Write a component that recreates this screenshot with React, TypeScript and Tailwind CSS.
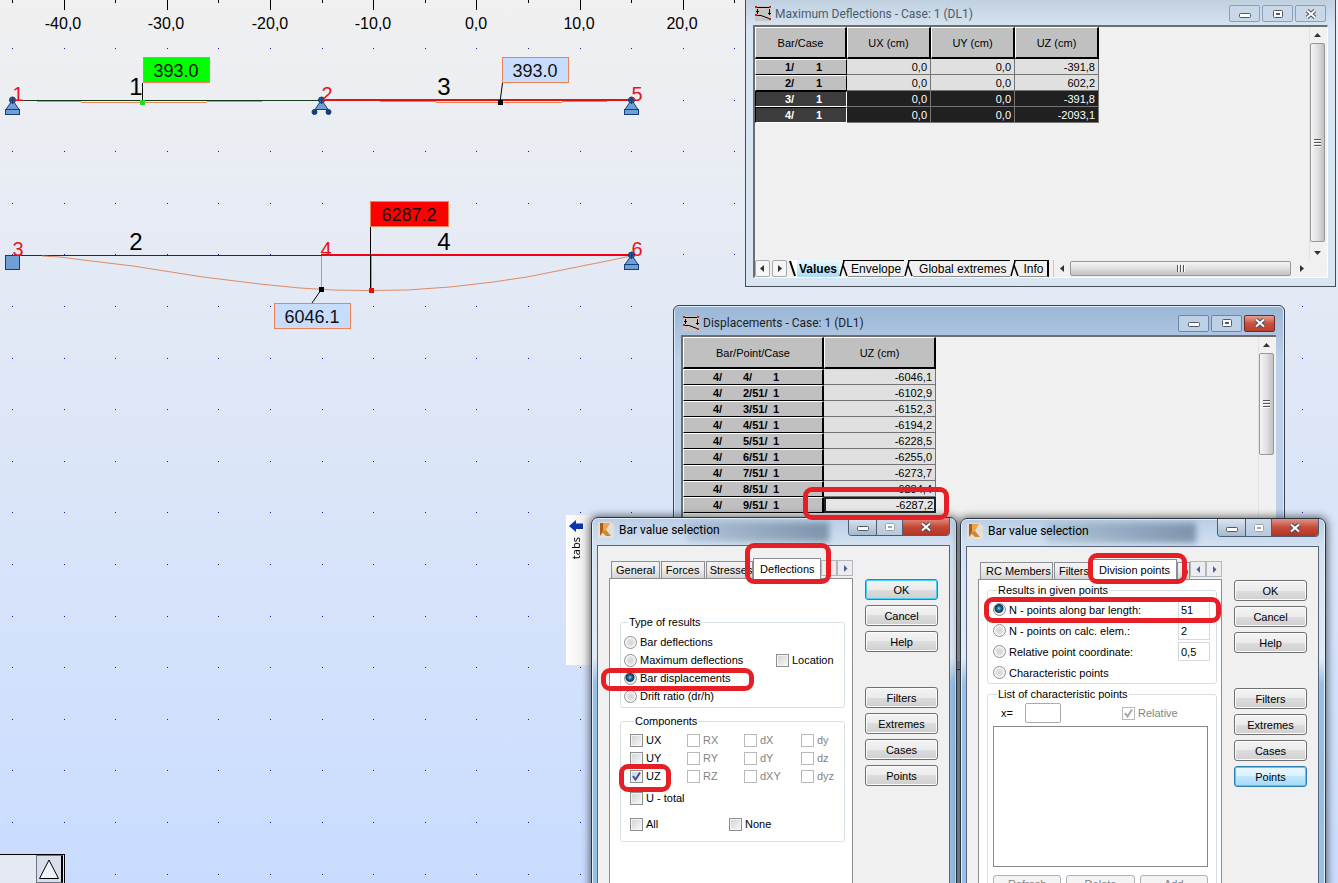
import type { ReactNode } from 'react';
import clsx from 'clsx';

const GRID_STEP = 51.6;
const GRID_X = Array.from({ length: 26 }, (_, i) => Math.round(12 + i * GRID_STEP));
const GRID_Y = Array.from({ length: 17 }, (_, i) => Math.round(48 + i * 51.6));

const AXIS_LABELS = [
  { x: 63, text: '-40,0' },
  { x: 166, text: '-30,0' },
  { x: 270, text: '-20,0' },
  { x: 373, text: '-10,0' },
  { x: 476, text: '0,0' },
  { x: 579, text: '10,0' },
  { x: 682, text: '20,0' },
];

const NODES = [
  { x: 18, y: 101, text: '1' },
  { x: 327, y: 101, text: '2' },
  { x: 637, y: 101, text: '5' },
  { x: 18, y: 256, text: '3' },
  { x: 326, y: 256, text: '4' },
  { x: 637, y: 256, text: '6' },
];

const BARS = [
  { x: 136, y: 95, text: '1' },
  { x: 444, y: 95, text: '3' },
  { x: 136, y: 250, text: '2' },
  { x: 444, y: 250, text: '4' },
];

const MAX_DEFLECTIONS = [
  { bar: '1/', values: ['0,0', '0,0', '-391,8'], selected: false },
  { bar: '2/', values: ['0,0', '0,0', '602,2'], selected: false },
  { bar: '3/', values: ['0,0', '0,0', '-391,8'], selected: true },
  { bar: '4/', values: ['0,0', '0,0', '-2093,1'], selected: true },
];

const DISPLACEMENTS = [
  { point: '4/', value: '-6046,1' },
  { point: '2/51/', value: '-6102,9' },
  { point: '3/51/', value: '-6152,3' },
  { point: '4/51/', value: '-6194,2' },
  { point: '5/51/', value: '-6228,5' },
  { point: '6/51/', value: '-6255,0' },
  { point: '7/51/', value: '-6273,7' },
  { point: '8/51/', value: '-6284,4' },
  { point: '9/51/', value: '-6287,2' },
];

const COMPONENT_ROWS = [
  ['UX', 'RX', 'dX', 'dy'],
  ['UY', 'RY', 'dY', 'dz'],
  ['UZ', 'RZ', 'dXY', 'dyz'],
];

/* ---------- structural view ---------- */

function SupportBody({ x, y }: { x: number; y: number }) {
  return (
    <>
      <path d={`M${x - 1} ${y + 2}L${x - 6} ${y + 9.5}H${x + 7}L${x + 2} ${y + 2}Z`} />
      <circle cx={x + 0.5} cy={y} r="3" fill="#2c64a8" />
      <path d={`M${x - 3} ${y}H${x + 4}M${x + 0.5} ${y - 3}V${y + 4}`} />
    </>
  );
}

function PinSupport({ x, y }: { x: number; y: number }) {
  return (
    <g stroke="#123f78" fill="#6f9fd6">
      <SupportBody x={x} y={y} />
      <rect x={x - 6.5} y={y + 9.5} width="14" height="5" />
    </g>
  );
}

function RollerSupport({ x, y }: { x: number; y: number }) {
  return (
    <g stroke="#123f78" fill="#6f9fd6">
      <SupportBody x={x} y={y} />
      <path d={`M${x - 5} ${y + 9.5}L${x - 8} ${y + 12}M${x + 6} ${y + 9.5}L${x + 9} ${y + 12}`} strokeWidth="2" />
      <circle cx={x - 6.5} cy={y + 12} r="2.5" fill="#0c4285" />
      <circle cx={x + 7.5} cy={y + 12} r="2.5" fill="#0c4285" />
    </g>
  );
}

function ValueLabel({ x, y, width, fill, text }: { x: number; y: number; width: number; fill: string; text: string }) {
  return (
    <g>
      <rect x={x + 0.5} y={y + 0.5} width={width} height="25" fill={fill} stroke="#ef8354" />
      <text x={x + width / 2} y={y + 20} fontSize="18" textAnchor="middle" fill="#111">
        {text}
      </text>
    </g>
  );
}

function StructureView() {
  return (
    <svg className="absolute inset-0 h-full w-full font-['Liberation_Sans',sans-serif]">
      <g shapeRendering="crispEdges">
        {GRID_X.map((x, i) => (
          <g key={x}>
            <rect x={x} y="0" width="1" height={i % 2 ? 10 : 3} fill="#000" />
            {GRID_Y.map((y) => (
              <rect key={y} x={x} y={y} width="1" height="1" fill="#1a1a9c" />
            ))}
          </g>
        ))}
      </g>
      {AXIS_LABELS.map(({ x, text }) => (
        <text key={text} x={x} y="29" fontSize="16" textAnchor="middle">
          {text}
        </text>
      ))}

      <g shapeRendering="crispEdges" fill="none">
        <path d="M12 100.5H321M12 255.5H321" stroke="#123c1a" />
        <path d="M37 101.5H81M207 101.5H262M81 102.5H207" stroke="#e58a5c" />
        <path d="M321 100H631" stroke="#dc1414" strokeWidth="2" />
        <path d="M436 102.5H562M380 101.5H436M562 101.5H607" stroke="#f07a4a" />
        <path d="M321 255H631" stroke="#f00010" strokeWidth="2" />
        <path d="M321.5 256V289M371.5 256V290" stroke="#e58a5c" />
      </g>
      <polyline
        points="42,256 60,257 83,260 133,266 203,277 260,284 300,288 333,290 371,290.5 407,290 450,287 493,282 527,277 577,267 607,261 631,256"
        fill="none"
        stroke="#e08a62"
      />

      <path d="M142.5 83V102M502.5 83L500 102M370.5 227V290M321 290L312 303" stroke="#000" fill="none" />
      <rect x="140" y="100" width="5" height="5" fill="#20dc20" />
      <rect x="498" y="100" width="5" height="5" />
      <rect x="319" y="287" width="5" height="5" />
      <rect x="369" y="288" width="5" height="5" fill="#e80c0c" />

      <PinSupport x={12} y={100} />
      <RollerSupport x={321} y={100} />
      <PinSupport x={631} y={100} />
      <PinSupport x={631} y={255} />
      <rect x="5.5" y="255.5" width="14" height="14" fill="#6f9fd6" stroke="#123f78" />

      {NODES.map(({ x, y, text }) => (
        <text key={text} x={x} y={y} fontSize="20" textAnchor="middle" fill="#e8141c">
          {text}
        </text>
      ))}
      {BARS.map(({ x, y, text }) => (
        <text key={text} x={x} y={y} fontSize="24" textAnchor="middle">
          {text}
        </text>
      ))}

      <ValueLabel x={143} y={57} width={66} fill="#00ff00" text="393.0" />
      <ValueLabel x={502} y={57} width={66} fill="#c8dcff" text="393.0" />
      <ValueLabel x={370} y={201} width={78} fill="#ff0000" text="6287.2" />
      <ValueLabel x={274} y={303} width={76} fill="#c8dcff" text="6046.1" />
    </svg>
  );
}

/* ---------- window parts ---------- */

function TableIcon() {
  return (
    <svg viewBox="0 0 16 15" className="h-[15px] w-4 shrink-0">
      <rect width="16" height="15" fill="#c6c6c6" />
      <path d="M1 1.5H15M1 9.5H6L14 12.5" stroke="#000" fill="none" />
      <path d="M2.5 3V8M14.5 3V9M1 5.5H4M13 7.5H16" stroke="#000" fill="none" />
      <path d="M0 0H2V2H0ZM14 0H16V2H14ZM0 8H2V10H0ZM14 12H16V14H14Z" fill="#e01818" />
    </svg>
  );
}

function RobotIcon() {
  return (
    <svg viewBox="0 0 16 16" className="h-4 w-4 shrink-0">
      <path d="M0 0H13L16 3V16H0Z" fill="#fbe6c8" opacity=".55" />
      <path d="M2 1H5V9L2 14Z" fill="#a85f1c" />
      <path d="M5 1H12L8 8L5 9Z" fill="#eda445" />
      <path d="M2 14L5 9L8 8L13 14H8L5 11Z" fill="#d0862c" />
    </svg>
  );
}

function MinimizeGlyph({ muted = false }: { muted?: boolean }) {
  return (
    <svg viewBox="0 0 12 10" className="h-[10px] w-3">
      <rect x="0.5" y="4.5" width="11" height="4" rx="1" fill="#fff" stroke={muted ? '#9aa4b0' : '#51586a'} />
    </svg>
  );
}

function MaximizeGlyph({ muted = false }: { muted?: boolean }) {
  return (
    <svg viewBox="0 0 12 10" className="h-[10px] w-3">
      <rect x="1.5" y="1.5" width="9" height="7" rx="1" fill="#fff" stroke={muted ? '#9aa4b0' : '#51586a'} />
      <rect x="4.5" y="4.5" width="3" height="1" fill="none" stroke={muted ? '#9aa4b0' : '#51586a'} />
    </svg>
  );
}

function CloseGlyph() {
  return (
    <svg viewBox="0 0 12 10" className="h-[10px] w-3">
      <path d="M2 1.5L10 8.5M10 1.5L2 8.5" stroke="#4a4f5c" strokeWidth="4" />
      <path d="M2 1.5L10 8.5M10 1.5L2 8.5" stroke="#fff" strokeWidth="2" />
    </svg>
  );
}

const CLOSE_RED = 'border-[#6b2a28] bg-linear-to-b from-[#e3a092] from-0% via-[#c8503c] via-50% to-[#b8402c]';

function ChildWindowButtons({ active }: { active: boolean }) {
  const base = 'flex h-[17px] w-[31px] items-center justify-center rounded-[2px] border';
  const plain = active ? 'border-[#6d86a8] bg-[#bcd0e6]' : 'border-[#8b9dba] bg-[#c9d8e8]';
  return (
    <div className="ml-auto flex gap-0.5">
      <button aria-label="Minimize" className={clsx(base, plain)}>
        <MinimizeGlyph />
      </button>
      <button aria-label="Maximize" className={clsx(base, plain)}>
        <MaximizeGlyph />
      </button>
      <button aria-label="Close" className={clsx(base, active ? CLOSE_RED : plain)}>
        <CloseGlyph />
      </button>
    </div>
  );
}

type Direction = 'up' | 'down' | 'left' | 'right';

const ARROWS: Record<Direction, string> = {
  up: 'M1 6L4.5 2L8 6Z',
  down: 'M1 3L4.5 7L8 3Z',
  left: 'M6 1L2 4.5L6 8Z',
  right: 'M3 1L7 4.5L3 8Z',
};

function Arrow({ dir }: { dir: Direction }) {
  return (
    <svg viewBox="0 0 9 9" className="h-[9px] w-[9px]">
      <path d={ARROWS[dir]} fill="#333" />
    </svg>
  );
}

function VerticalScrollbar({ thumb }: { thumb: string }) {
  return (
    <div className="flex w-[18px] flex-col items-center border-l border-[#e2e2e2] bg-[#f1f1f1] pr-0.5">
      <button aria-label="Scroll up" className="flex h-4 w-full items-center justify-center">
        <Arrow dir="up" />
      </button>
      <div
        className={clsx(
          'flex w-[15px] flex-col items-center justify-center gap-px rounded-[2px] border border-[#979797] bg-linear-to-r from-[#f5f5f5] via-[#e0e0e2] to-[#c0c0c6]',
          thumb,
        )}
      >
        <span className="h-0.5 w-[7px] border-b border-white bg-[#555]" />
        <span className="h-0.5 w-[7px] border-b border-white bg-[#555]" />
        <span className="h-0.5 w-[7px] border-b border-white bg-[#555]" />
      </div>
      <button aria-label="Scroll down" className="mt-auto flex h-4 w-full items-center justify-center">
        <Arrow dir="down" />
      </button>
    </div>
  );
}

function HeaderCell({ className, children }: { className: string; children: ReactNode }) {
  return (
    <th
      scope="col"
      className={clsx(
        'h-8 border-t border-r-2 border-b-2 border-l border-t-white border-r-black border-b-black border-l-white bg-[#c0c0c0] font-normal',
        className,
      )}
    >
      {children}
    </th>
  );
}

/* ---------- child windows ---------- */

function SheetSlant() {
  return (
    <svg viewBox="0 0 9 17" className="h-[17px] w-[9px] shrink-0">
      <path d="M4 0.5H9" stroke="#000" />
      <path d="M5 1L1 16M4 5L8 16" stroke="#000" strokeWidth="1.5" fill="none" />
    </svg>
  );
}

function MaxDeflectionsWindow() {
  return (
    <section className="absolute -top-px left-[745px] flex h-[288px] w-[591px] flex-col border border-[#454c56] bg-linear-to-b from-[#c0d0df] to-[#d8e5f2] to-10% pr-[7px] pb-2 pl-[7px]">
      <header className="flex h-[25px] items-center gap-1 pt-0.5 pr-0.5 pl-0.5">
        <TableIcon />
        <h2 className="font-['Roboto',sans-serif] text-xs text-[#4c5b6c]">Maximum Deflections - Case: 1 (DL1)</h2>
        <ChildWindowButtons active={false} />
      </header>
      <div className="flex min-h-0 flex-1 flex-col border-t-2 border-r border-b border-l-2 border-t-[#6d6d6d] border-r-white border-b-white border-l-[#6d6d6d] bg-[#f0f0f0]">
        <div className="flex min-h-0 flex-1">
          <div className="flex-1">
            <table className="border-separate border-spacing-0 text-[11px] leading-[14px] text-black">
              <thead>
                <tr>
                  <HeaderCell className="w-[92px]">Bar/Case</HeaderCell>
                  <HeaderCell className="w-[84px]">UX (cm)</HeaderCell>
                  <HeaderCell className="w-[84px]">UY (cm)</HeaderCell>
                  <HeaderCell className="w-[84px]">UZ (cm)</HeaderCell>
                </tr>
              </thead>
              <tbody>
                {MAX_DEFLECTIONS.map(({ bar, values, selected }) => (
                  <tr key={bar} className={clsx('h-4', selected && 'text-white')}>
                    <th
                      scope="row"
                      className={clsx(
                        'border p-0 pl-[29px] text-left',
                        selected
                          ? 'border-t-black border-r-white border-b-white border-l-black bg-[#3c3c3c]'
                          : 'border-t-white border-r-black border-b-black border-l-white bg-[#c0c0c0]',
                      )}
                    >
                      <span className="inline-block w-[31px]">{bar}</span>1
                    </th>
                    {values.map((value, i) => (
                      <td
                        key={i}
                        className={clsx(
                          'border-r border-b border-[#757575] p-0 pr-[3px] text-right',
                          selected ? 'bg-[#202020]' : 'bg-[#e0e0e0]',
                        )}
                      >
                        {value}
                      </td>
                    ))}
                  </tr>
                ))}
              </tbody>
            </table>
          </div>
          <VerticalScrollbar thumb="h-[199px]" />
        </div>
        <div className="flex h-[17px] items-stretch text-xs leading-4 text-black">
          <button aria-label="Previous sheet" className="flex w-[15px] items-center justify-center rounded-[2px] border border-[#a8a8a8] bg-[#f6f6f6]">
            <Arrow dir="left" />
          </button>
          <button aria-label="Next sheet" className="ml-0.5 flex w-[15px] items-center justify-center rounded-[2px] border border-[#a8a8a8] bg-[#f6f6f6]">
            <Arrow dir="right" />
          </button>
          <svg viewBox="0 0 8 17" className="ml-[2px] h-[17px] w-2">
            <path d="M1 0L6 17H8V0Z" fill="#fff" />
            <path d="M1 1L6 16" stroke="#000" strokeWidth="2" />
          </svg>
          <button className="bg-linear-to-b from-[#e8f8fe] to-[#a8dcf4] px-0.5 font-bold">Values</button>
          <SheetSlant />
          <button className="border-t border-b border-t-black border-b-[#888] px-[3px]">Envelope</button>
          <SheetSlant />
          <button className="border-t border-b border-t-black border-b-[#888] pr-1 pl-[6px]">Global extremes</button>
          <SheetSlant />
          <button className="border-t border-r-2 border-b border-black border-b-[#888] px-1">Info</button>
          <div className="ml-1 flex flex-1 items-center border-l border-[#c8c8c8]">
            <button aria-label="Scroll left" className="flex w-4 justify-center">
              <Arrow dir="left" />
            </button>
            <div className="flex h-[15px] flex-1 items-center justify-center gap-px rounded-[2px] border border-[#979797] bg-linear-to-b from-[#f5f5f5] via-[#e0e0e2] to-[#c0c0c6]">
              <span className="h-[7px] w-0.5 border-r border-white bg-[#555]" />
              <span className="h-[7px] w-0.5 border-r border-white bg-[#555]" />
              <span className="h-[7px] w-0.5 border-r border-white bg-[#555]" />
            </div>
            <button aria-label="Scroll right" className="mr-4 flex w-5 justify-center">
              <Arrow dir="right" />
            </button>
          </div>
        </div>
      </div>
    </section>
  );
}

function DisplacementsWindow() {
  return (
    <section className="absolute top-[305px] left-[673px] flex h-[365px] w-[612px] flex-col rounded-t-[6px] border border-[#39424e] bg-linear-to-b from-[#9ab6d6] to-[#bdd2ea] to-15% pr-2 pb-2 pl-[7px] shadow-[inset_0_0_0_1px_#dcebf8]">
      <header className="flex h-[29px] items-center gap-1 pt-[5px] pr-px pl-0.5">
        <TableIcon />
        <h2 className="font-['Roboto',sans-serif] text-xs text-[#1b1f26]">Displacements - Case: 1 (DL1)</h2>
        <ChildWindowButtons active />
      </header>
      <div className="flex min-h-0 flex-1 border-t-2 border-l-2 border-[#6d6d6d] bg-[#f0f0f0]">
        <div className="flex-1">
          <table className="border-separate border-spacing-0 text-[11px] leading-[14px] text-black">
            <thead>
              <tr>
                <HeaderCell className="w-[141px]">Bar/Point/Case</HeaderCell>
                <HeaderCell className="w-28">UZ (cm)</HeaderCell>
              </tr>
            </thead>
            <tbody>
              {DISPLACEMENTS.map(({ point, value }, i) => (
                <tr key={point} className="h-4">
                  <th
                    scope="row"
                    className="border border-r-2 border-t-white border-r-black border-b-black border-l-white bg-[#c0c0c0] p-0 pl-[29px] text-left"
                  >
                    <span className="inline-block w-[30px]">4/</span>
                    <span className="inline-block w-[30px]">{point}</span>1
                  </th>
                  <td
                    className={clsx(
                      'p-0 text-right',
                      i === DISPLACEMENTS.length - 1
                        ? 'border-2 border-[#222] bg-[#e6e6e6] pr-px leading-3'
                        : 'border-r border-b border-[#757575] bg-[#e0e0e0] pr-[3px]',
                    )}
                  >
                    {value}
                  </td>
                </tr>
              ))}
            </tbody>
          </table>
        </div>
        <VerticalScrollbar thumb="h-[102px]" />
      </div>
    </section>
  );
}

/* ---------- dialogs ---------- */

function CheckBox({ label, checked = false, disabled = false }: { label: string; checked?: boolean; disabled?: boolean }) {
  return (
    <label className={clsx('flex items-center gap-[3px]', disabled ? 'text-[#838383]' : 'text-black')}>
      <span className="grid">
        <input
          type="checkbox"
          defaultChecked={checked}
          disabled={disabled}
          className={clsx(
            'col-start-1 row-start-1 h-[13px] w-[13px] appearance-none border',
            disabled
              ? 'border-[#b9b9b9] bg-white'
              : 'border-[#8e8f8f] bg-linear-to-br from-[#cfd2d6] to-[#f8f8f8] shadow-[inset_0_0_0_1px_#f4f4f4]',
          )}
        />
        {checked && (
          <svg viewBox="0 0 13 13" className="pointer-events-none col-start-1 row-start-1 h-[13px] w-[13px]">
            <path d="M3 6L5.5 9.5L10 2.5" fill="none" stroke={disabled ? '#a8a8a8' : '#3a50a0'} strokeWidth="2" />
          </svg>
        )}
      </span>
      {label}
    </label>
  );
}

function Radio({ name, label, checked = false }: { name: string; label: string; checked?: boolean }) {
  return (
    <label className="flex items-center gap-[3px] whitespace-nowrap text-black">
      <input
        type="radio"
        name={name}
        defaultChecked={checked}
        className="h-[13px] w-[13px] appearance-none rounded-full border border-[#8e8f8f] bg-[radial-gradient(circle,#d4d6d9_0,#dddfe1_3px,#f8f8f8_5px)] checked:bg-[radial-gradient(circle_at_45%_40%,#8fd6f4_0,#1f6f9c_2px,#0c3350_4px,#eeeeee_5px)]"
      />
      {label}
    </label>
  );
}

function Group({ title, className, children }: { title: string; className: string; children: ReactNode }) {
  return (
    <fieldset className={clsx('min-w-0 rounded-[3px] border border-[#d5dfe5]', className)}>
      <legend className="ml-1 px-px leading-[14px] text-black">{title}</legend>
      {children}
    </fieldset>
  );
}

const TAB_CLASS =
  'h-[17px] overflow-hidden border border-b-0 border-[#8c8e94] bg-linear-to-b from-[#f3f3f3] via-[#ebebeb] to-[#d3d3d3] text-left whitespace-nowrap';
const ACTIVE_TAB_CLASS = 'relative -mb-px h-[21px] border border-b-0 border-[#8c8e94] bg-white whitespace-nowrap';

function TabArrow({ dir }: { dir: 'left' | 'right' }) {
  return (
    <button
      aria-label={`Scroll tabs ${dir}`}
      className="mb-0.5 flex h-4 w-4 items-center justify-center border border-[#b4b8bd] bg-[#ededf0]"
    >
      <svg viewBox="0 0 7 7" className="h-[7px] w-[7px]">
        <path d={dir === 'left' ? 'M5 0L1.5 3.5L5 7Z' : 'M2 0L5.5 3.5L2 7Z'} fill="#4a62a0" />
      </svg>
    </button>
  );
}

type ButtonState = 'normal' | 'default' | 'hot';

const BUTTON_STATES: Record<ButtonState, string> = {
  normal:
    'border-[#707070] bg-[linear-gradient(#f3f3f3,#ebebeb_50%,#dddddd_50%,#cfcfcf)] shadow-[inset_0_0_0_1px_#fcfcfc]',
  default:
    'border-[#3c7fb1] bg-[linear-gradient(#f3f3f3,#ebebeb_50%,#dddddd_50%,#cfcfcf)] shadow-[inset_0_0_0_1px_#48d0f4]',
  hot: 'border-[#2c7fb0] bg-[linear-gradient(#eaf6fd,#d9f0fc_50%,#bee6fd_50%,#a7d9f5)] shadow-[inset_0_0_0_1px_#48d0f4]',
};

function DialogButton({ label, state = 'normal' }: { label: string; state?: ButtonState }) {
  return (
    <button className={clsx('h-[21px] rounded-[3px] border text-center text-black', BUTTON_STATES[state])}>{label}</button>
  );
}

interface DialogProps {
  className: string;
  pointsState?: ButtonState;
  okState?: ButtonState;
  ghost: string;
  tabs: ReactNode;
  children: ReactNode;
}

function BarValueDialog({ className, pointsState, okState, ghost, tabs, children }: DialogProps) {
  return (
    <section
      className={clsx(
        'absolute -bottom-5 flex w-[366px] flex-col rounded-t-[7px] border border-[#2c3440] bg-[linear-gradient(#b9cee6,#d3e2f2_28px,#dfeaf6_140px,#98bfe6_165px)] pr-[6px] pl-[5px] shadow-[0_0_9px_1px_rgba(0,0,0,0.6),inset_0_0_0_1px_#e4f0fa]',
        className,
      )}
    >
      <header className="relative flex h-[27px] shrink-0 items-start pl-px">
        <div className={clsx('absolute top-1 h-5 bg-linear-to-r from-[#5c7690]/20 to-[#4c6680]/60 blur-[3px]', ghost)} />
        <div className="relative flex items-center gap-[5px] pt-1">
          <RobotIcon />
          <h2 className="font-['Roboto',sans-serif] text-xs leading-4 text-black">Bar value selection</h2>
        </div>
        <div className="relative ml-auto flex h-[18px] overflow-hidden rounded-b-[4px] border border-t-0 border-[#4e5c6e]">
          <button aria-label="Minimize" className="flex w-7 items-center justify-center border-r border-[#4e5c6e] bg-linear-to-b from-[#dbe6f1] to-[#a4b8ce]">
            <MinimizeGlyph />
          </button>
          <button aria-label="Maximize" className="flex w-[26px] items-center justify-center border-r border-[#4e5c6e] bg-linear-to-b from-[#cddbe9] to-[#b6c8da]">
            <MaximizeGlyph muted />
          </button>
          <button aria-label="Close" className="flex w-[46px] items-center justify-center bg-linear-to-b from-[#dd9486] via-[#c54a38] to-[#b23424]">
            <CloseGlyph />
          </button>
        </div>
      </header>
      <div className="flex flex-1 gap-3 border border-[#56657a] bg-[#f0f0f0] px-[11px] text-[11px] leading-[14px]">
        <div className="flex min-w-0 flex-1 flex-col pt-3">
          <div className="flex h-5 shrink-0 items-end pl-0.5">{tabs}</div>
          <div className="flex-1 border border-[#8c8e94] bg-white">{children}</div>
        </div>
        <div className="flex w-[73px] flex-col gap-[5px] pt-[33px]">
          <DialogButton label="OK" state={okState} />
          <DialogButton label="Cancel" />
          <DialogButton label="Help" />
          <div className="h-[25px]" />
          <DialogButton label="Filters" />
          <DialogButton label="Extremes" />
          <DialogButton label="Cases" />
          <DialogButton label="Points" state={pointsState} />
        </div>
      </div>
    </section>
  );
}

function DeflectionsDialog() {
  return (
    <BarValueDialog
      className="top-[517px] left-[591px]"
      okState="default"
      ghost="left-[90px] w-[142px]"
      tabs={
        <>
          <button className={clsx(TAB_CLASS, 'w-[49px] px-1')}>General</button>
          <button className={clsx(TAB_CLASS, 'ml-px w-11 px-1')}>Forces</button>
          <button className={clsx(TAB_CLASS, 'ml-px w-12 pl-[3px]')}>Stresses</button>
          <button className={clsx(ACTIVE_TAB_CLASS, 'w-[68px]')}>Deflections</button>
          <TabArrow dir="left" />
          <TabArrow dir="right" />
        </>
      }
    >
      <Group title="Type of results" className="mt-9 mr-[7px] ml-[10px] pb-0.5 pl-[3px]">
        <div className="grid grid-cols-[152px_1fr] auto-rows-[18px] items-center pt-1">
          <Radio name="result-type" label="Bar deflections" />
          <span />
          <Radio name="result-type" label="Maximum deflections" />
          <CheckBox label="Location" />
          <Radio name="result-type" label="Bar displacements" checked />
          <span />
          <Radio name="result-type" label="Drift ratio (dr/h)" />
        </div>
      </Group>
      <Group title="Components" className="mt-1.5 mr-[7px] ml-[10px] pb-2 pl-[9px]">
        <div className="grid grid-cols-[57px_57px_57px_1fr] auto-rows-[18px] items-center pt-[3px]">
          {COMPONENT_ROWS.flat().map((name, i) => (
            <CheckBox key={name} label={name} checked={name === 'UZ'} disabled={i % 4 !== 0} />
          ))}
        </div>
        <div className="mt-1 flex h-[18px] items-center">
          <CheckBox label="U - total" />
        </div>
        <div className="mt-2 grid h-[18px] grid-cols-[99px_1fr] items-center">
          <CheckBox label="All" />
          <CheckBox label="None" />
        </div>
      </Group>
    </BarValueDialog>
  );
}

function DivisionRow({ label, value, checked }: { label: string; value?: string; checked?: boolean }) {
  return (
    <div className="flex h-[21px] items-center justify-between">
      <Radio name="division" label={label} checked={checked} />
      {value && (
        <input
          type="text"
          aria-label={label}
          defaultValue={value}
          className="h-[19px] w-8 border border-[#d5dade] bg-white px-0.5 text-black"
        />
      )}
    </div>
  );
}

function DivisionPointsDialog() {
  return (
    <BarValueDialog
      className="top-[518px] left-[960px]"
      pointsState="hot"
      ghost="left-[80px] w-[150px]"
      tabs={
        <>
          <button className={clsx(TAB_CLASS, 'w-[73px] px-[5px]')}>RC Members</button>
          <button className={clsx(TAB_CLASS, 'ml-px w-[38px] px-1')}>Filters</button>
          <button className={clsx(ACTIVE_TAB_CLASS, 'w-[85px]')}>Division points</button>
          <button aria-label="Code parameters" className={clsx(TAB_CLASS, 'w-[13px] pl-1')}>
            o
          </button>
          <TabArrow dir="left" />
          <TabArrow dir="right" />
        </>
      }
    >
      <Group title="Results in given points" className="mt-[3px] mr-1 ml-2 pr-[6px] pl-[5px]">
        <div className="pt-0.5">
          <DivisionRow label="N - points along bar length:" value="51" checked />
          <DivisionRow label="N - points on calc. elem.:" value="2" />
          <DivisionRow label="Relative point coordinate:" value="0,5" />
          <DivisionRow label="Characteristic points" />
        </div>
      </Group>
      <Group title="List of characteristic points" className="mt-[3px] mr-1 ml-2 pr-2 pl-[5px]">
        <div className="flex h-6 items-center">
          <label htmlFor="point-x" className="w-8 pl-2 text-black">
            x=
          </label>
          <input id="point-x" type="text" className="h-5 w-9 rounded-[2px] border border-[#aaa] bg-white px-0.5 text-black" />
          <div className="ml-auto w-[86px]">
            <CheckBox label="Relative" checked disabled />
          </div>
        </div>
        <div className="mt-px h-[141px] border border-[#828790] bg-white" />
        <div className="mt-2 grid grid-cols-3 gap-[5px] pb-4">
          {['Refresh', 'Delete', 'Add'].map((label) => (
            <button
              key={label}
              disabled
              className="flex h-[21px] items-start justify-center rounded-[3px] border border-[#adb2b5] bg-[#f4f4f4] pt-px text-[#838383]"
            >
              {label}
            </button>
          ))}
        </div>
      </Group>
    </BarValueDialog>
  );
}

/* ---------- page ---------- */

const MARKS = [
  'top-[487px] left-[803px] h-[33px] w-[146px]',
  'top-[543px] left-[745px] h-[41px] w-[86px]',
  'top-[668px] left-[601px] h-[23px] w-[153px]',
  'top-[764px] left-[619px] h-[28px] w-[52px]',
  'top-[553px] left-[1088px] h-[31px] w-[99px]',
  'top-[597px] left-[984px] h-[26px] w-[237px]',
];

export default function App() {
  return (
    <main className="relative h-screen w-full overflow-hidden bg-linear-to-b from-[#f0f0f0] to-[#c9dcff] font-['Liberation_Sans',Arial,sans-serif]">
      <StructureView />
      <MaxDeflectionsWindow />
      <DisplacementsWindow />

      <aside className="absolute top-[515px] left-[566px] flex h-[150px] w-7 flex-col items-start gap-1 bg-linear-to-r from-white to-[#e6e6e8] pt-1 pl-0.5">
        <svg viewBox="0 0 16 14" className="h-[14px] w-4">
          <path d="M1 7L8 1V4.5H15V10H8V13Z" fill="#0b35a8" />
        </svg>
        <button className="rotate-180 font-['Noto_Sans',sans-serif] text-[11px] leading-4 text-black [writing-mode:vertical-rl]">tabs</button>
      </aside>

      <DeflectionsDialog />
      <DivisionPointsDialog />

      <div className="absolute bottom-0 left-0 flex h-[29px] w-[65px] justify-end border-t border-r border-black bg-[#e4e9f2] pr-px">
        <button aria-label="View orientation" className="flex w-[27px] items-center justify-center border border-r-2 border-[#6d7380] border-r-black bg-[#d9dfea]">
          <svg viewBox="0 0 22 22" className="h-[22px] w-[22px]">
            <path d="M11 2L20.5 20.5H1.5Z" fill="#eef2f8" stroke="#000" />
          </svg>
        </button>
      </div>

      {MARKS.map((mark) => (
        <div key={mark} className={clsx('pointer-events-none absolute rounded-[9px] border-[5px] border-[#e61e26]', mark)} />
      ))}
    </main>
  );
}
